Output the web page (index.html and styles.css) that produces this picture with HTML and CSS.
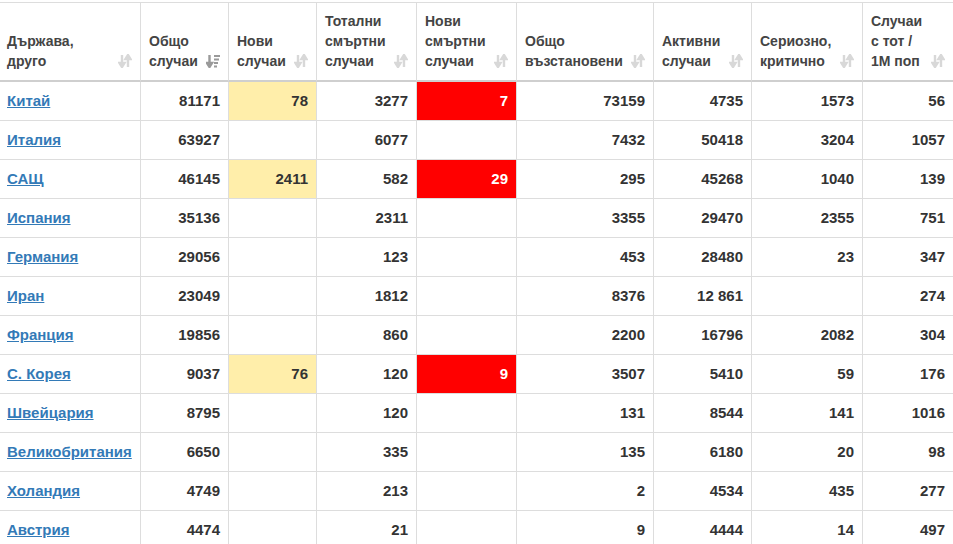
FILE: index.html
```html
<!DOCTYPE html>
<html lang="bg">
<head>
<meta charset="utf-8">
<title>Коронавирус</title>
<link rel="stylesheet" href="styles.css">
</head>
<body>
<table class="stats">
  <colgroup>
    <col class="c1"><col class="c2"><col class="c3"><col class="c4"><col class="c5"><col class="c6"><col class="c7"><col class="c8"><col class="c9">
  </colgroup>
  <thead>
    <tr>
      <th><div class="hd"><span>Държава,<br>друго</span><svg class="sort" viewBox="0 0 14 14"><path d="M4 1v9M1.5 9L4 13L6.5 9Z M10 13V4M7.5 5L10 1L12.5 5Z"/></svg></div></th>
      <th><div class="hd"><span>Общо<br>случаи</span><svg class="sort on" viewBox="0 0 14 14"><path d="M3.5 1v9M1 9L3.5 13L6 9Z"/><rect x="8" y="1" width="6" height="2"/><rect x="8" y="4.5" width="5" height="2"/><rect x="8" y="8" width="4" height="2"/><rect x="8" y="11.5" width="3" height="2"/></svg></div></th>
      <th><div class="hd"><span>Нови<br>случаи</span><svg class="sort" viewBox="0 0 14 14"><path d="M4 1v9M1.5 9L4 13L6.5 9Z M10 13V4M7.5 5L10 1L12.5 5Z"/></svg></div></th>
      <th><div class="hd"><span>Тотални<br>смъртни<br>случаи</span><svg class="sort" viewBox="0 0 14 14"><path d="M4 1v9M1.5 9L4 13L6.5 9Z M10 13V4M7.5 5L10 1L12.5 5Z"/></svg></div></th>
      <th><div class="hd"><span>Нови<br>смъртни<br>случаи</span><svg class="sort" viewBox="0 0 14 14"><path d="M4 1v9M1.5 9L4 13L6.5 9Z M10 13V4M7.5 5L10 1L12.5 5Z"/></svg></div></th>
      <th><div class="hd"><span>Общо<br>възстановени</span><svg class="sort" viewBox="0 0 14 14"><path d="M4 1v9M1.5 9L4 13L6.5 9Z M10 13V4M7.5 5L10 1L12.5 5Z"/></svg></div></th>
      <th><div class="hd"><span>Активни<br>случаи</span><svg class="sort" viewBox="0 0 14 14"><path d="M4 1v9M1.5 9L4 13L6.5 9Z M10 13V4M7.5 5L10 1L12.5 5Z"/></svg></div></th>
      <th><div class="hd"><span>Сериозно,<br>критично</span><svg class="sort" viewBox="0 0 14 14"><path d="M4 1v9M1.5 9L4 13L6.5 9Z M10 13V4M7.5 5L10 1L12.5 5Z"/></svg></div></th>
      <th><div class="hd"><span>Случаи<br>с тот /<br>1М поп</span><svg class="sort" viewBox="0 0 14 14"><path d="M4 1v9M1.5 9L4 13L6.5 9Z M10 13V4M7.5 5L10 1L12.5 5Z"/></svg></div></th>
    </tr>
  </thead>
  <tbody>
    <tr><td class="name"><a href="#">Китай</a></td><td>81171</td><td class="new">78</td><td>3277</td><td class="dead">7</td><td>73159</td><td>4735</td><td>1573</td><td>56</td></tr>
    <tr><td class="name"><a href="#">Италия</a></td><td>63927</td><td></td><td>6077</td><td></td><td>7432</td><td>50418</td><td>3204</td><td>1057</td></tr>
    <tr><td class="name"><a href="#">САЩ</a></td><td>46145</td><td class="new">2411</td><td>582</td><td class="dead">29</td><td>295</td><td>45268</td><td>1040</td><td>139</td></tr>
    <tr><td class="name"><a href="#">Испания</a></td><td>35136</td><td></td><td>2311</td><td></td><td>3355</td><td>29470</td><td>2355</td><td>751</td></tr>
    <tr><td class="name"><a href="#">Германия</a></td><td>29056</td><td></td><td>123</td><td></td><td>453</td><td>28480</td><td>23</td><td>347</td></tr>
    <tr><td class="name"><a href="#">Иран</a></td><td>23049</td><td></td><td>1812</td><td></td><td>8376</td><td>12 861</td><td></td><td>274</td></tr>
    <tr><td class="name"><a href="#">Франция</a></td><td>19856</td><td></td><td>860</td><td></td><td>2200</td><td>16796</td><td>2082</td><td>304</td></tr>
    <tr><td class="name"><a href="#">С. Корея</a></td><td>9037</td><td class="new">76</td><td>120</td><td class="dead">9</td><td>3507</td><td>5410</td><td>59</td><td>176</td></tr>
    <tr><td class="name"><a href="#">Швейцария</a></td><td>8795</td><td></td><td>120</td><td></td><td>131</td><td>8544</td><td>141</td><td>1016</td></tr>
    <tr><td class="name"><a href="#">Великобритания</a></td><td>6650</td><td></td><td>335</td><td></td><td>135</td><td>6180</td><td>20</td><td>98</td></tr>
    <tr><td class="name"><a href="#">Холандия</a></td><td>4749</td><td></td><td>213</td><td></td><td>2</td><td>4534</td><td>435</td><td>277</td></tr>
    <tr><td class="name"><a href="#">Австрия</a></td><td>4474</td><td></td><td>21</td><td></td><td>9</td><td>4444</td><td>14</td><td>497</td></tr>
  </tbody>
</table>
</body>
</html>
```
FILE: styles.css
```css
html, body {
  margin: 0;
  padding: 0;
  overflow: hidden;
  background: #fff;
}
body {
  font-family: "Liberation Sans", Arial, sans-serif;
  color: #333;
}
.stats {
  border-collapse: separate;
  border-spacing: 0;
  table-layout: fixed;
  width: 955px;
  margin: 2px 0 0 -2px;
}
.c1 { width: 142px; }
.c2 { width: 88px; }
.c3 { width: 88px; }
.c4 { width: 100px; }
.c5 { width: 100px; }
.c6 { width: 137px; }
.c7 { width: 98px; }
.c8 { width: 111px; }
.c9 { width: 91px; }

.stats th {
  box-sizing: border-box;
  border-top: 1px solid #ddd;
  border-left: 1px solid #ddd;
  border-bottom: 2px solid #cfcfcf;
  padding: 8px 8px 9px 8px;
  text-align: left;
  vertical-align: bottom;
  font-size: 14px;
  line-height: 20px;
  font-weight: bold;
  color: #444;
}
.hd {
  display: flex;
  justify-content: space-between;
  align-items: flex-end;
  gap: 4px;
}
.sort {
  flex: none;
  width: 14px;
  height: 14px;
  margin-bottom: 3px;
  fill: #d8d8d8;
  stroke: #d8d8d8;
  stroke-width: 2.4;
}
.sort rect { stroke: none; }
.sort.on {
  fill: #9a9a9a;
  stroke: #9a9a9a;
}
.stats td {
  box-sizing: border-box;
  border-left: 1px solid #ddd;
  border-bottom: 1px solid #ddd;
  padding: 8px 8px;
  font-size: 15px;
  line-height: 22px;
  font-weight: bold;
  text-align: right;
  color: #333;
  white-space: nowrap;
}
.stats td.name {
  text-align: left;
}
.stats td.name a {
  color: #337ab7;
  text-decoration: underline;
}
.stats td.new {
  background: #ffeeaa;
}
.stats td.dead {
  background: #ff0000;
  color: #fff;
}
```
